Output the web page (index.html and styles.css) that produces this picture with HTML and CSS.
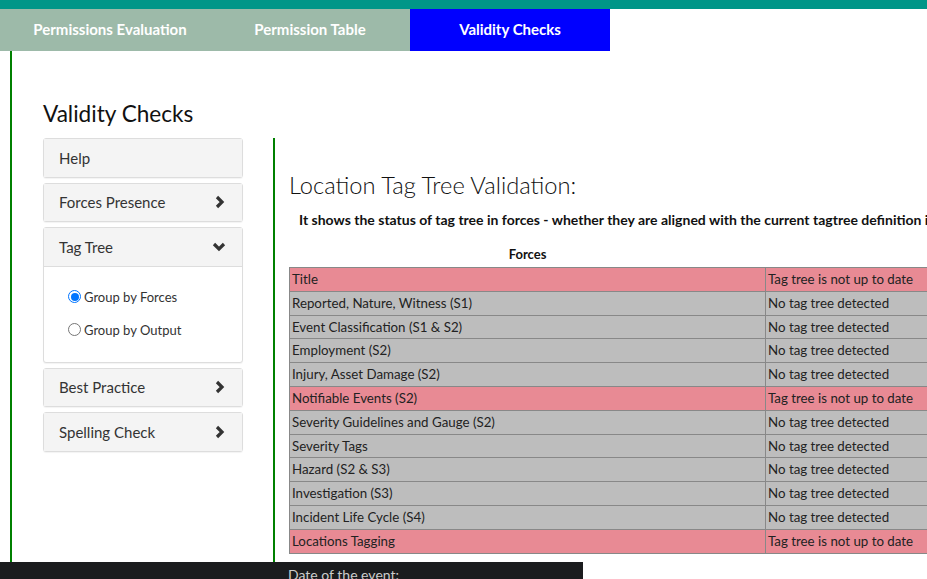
FILE: index.html
```html
<!DOCTYPE html>
<html>
<head>
<meta charset="utf-8">
<link rel="stylesheet" href="styles.css">
</head>
<body>
<div class="topbar"></div>
<nav class="tabs">
  <div class="tab tab-first">Permissions Evaluation</div>
  <div class="tab">Permission Table</div>
  <div class="tab active">Validity Checks</div>
</nav>
<main class="main">
  <h1 class="page-title">Validity Checks</h1>
  <div class="columns">
    <aside class="sidebar">
      <div class="panel"><div class="panel-head">Help</div></div>
      <div class="panel"><div class="panel-head">Forces Presence
        <svg class="chev" viewBox="0 0 12 14"><polyline points="3,2 8,7 3,12"/></svg></div></div>
      <div class="panel"><div class="panel-head open">Tag Tree
        <svg class="chev" viewBox="0 0 14 12"><polyline points="2,3 7,8 12,3"/></svg></div>
        <div class="panel-body">
          <label class="radio"><span class="dot checked"></span>Group by Forces</label>
          <label class="radio"><span class="dot"></span>Group by Output</label>
        </div>
      </div>
      <div class="panel"><div class="panel-head">Best Practice
        <svg class="chev" viewBox="0 0 12 14"><polyline points="3,2 8,7 3,12"/></svg></div></div>
      <div class="panel"><div class="panel-head">Spelling Check
        <svg class="chev" viewBox="0 0 12 14"><polyline points="3,2 8,7 3,12"/></svg></div></div>
    </aside>
    <section class="content">
      <h2 class="section-title">Location Tag Tree Validation:</h2>
      <p class="desc">It shows the status of tag tree in forces - whether they are aligned with the current tagtree definition in</p>
      <table class="grid">
        <thead>
          <tr><th class="c1">Forces</th><th class="c2"></th></tr>
        </thead>
        <tbody>
          <tr class="bad"><td>Title</td><td>Tag tree is not up to date</td></tr>
          <tr><td>Reported, Nature, Witness (S1)</td><td>No tag tree detected</td></tr>
          <tr><td>Event Classification (S1 &amp; S2)</td><td>No tag tree detected</td></tr>
          <tr><td>Employment (S2)</td><td>No tag tree detected</td></tr>
          <tr><td>Injury, Asset Damage (S2)</td><td>No tag tree detected</td></tr>
          <tr class="bad"><td>Notifiable Events (S2)</td><td>Tag tree is not up to date</td></tr>
          <tr><td>Severity Guidelines and Gauge (S2)</td><td>No tag tree detected</td></tr>
          <tr><td>Severity Tags</td><td>No tag tree detected</td></tr>
          <tr><td>Hazard (S2 &amp; S3)</td><td>No tag tree detected</td></tr>
          <tr><td>Investigation (S3)</td><td>No tag tree detected</td></tr>
          <tr><td>Incident Life Cycle (S4)</td><td>No tag tree detected</td></tr>
          <tr class="bad"><td>Locations Tagging</td><td>Tag tree is not up to date</td></tr>
        </tbody>
      </table>
    </section>
  </div>
</main>
<div class="footer-tip"><span>Date of the event:</span></div>
</body>
</html>
```

FILE: styles.css
```css
html, body {
  margin: 0;
  padding: 0;
  width: 927px;
  height: 579px;
  overflow: hidden;
  background: #fff;
  font-family: Lato, "Source Sans Pro", "Noto Sans", sans-serif;
  color: #333;
}
.topbar {
  height: 9px;
  background: #009688;
}
.tabs {
  display: flex;
  height: 42px;
  background: #9dbaa9;
  width: 610px;
}
.tab {
  width: 200px;
  display: flex;
  align-items: center;
  justify-content: center;
  color: #fff;
  font-weight: 700;
  font-size: 15px;
  padding-bottom: 2px;
  box-sizing: border-box;
}
.tab-first {
  width: 210px;
  padding-left: 10px;
}
.tab.active {
  background: #0000ff;
}
.main {
  margin-left: 10px;
  border-left: 2px solid #008000;
  height: 511px;
  padding-left: 31px;
  box-sizing: border-box;
  display: flex;
  flex-direction: column;
}
.page-title {
  margin: 48px 0 0 0;
  font-size: 22.6px;
  font-weight: 400;
  line-height: 30px;
  color: #111;
  height: 39px;
}
.columns {
  display: flex;
  flex: 1;
  gap: 30px;
}
.sidebar {
  width: 200px;
  display: flex;
  flex-direction: column;
  gap: 5px;
}
.panel {
  border: 1px solid #ddd;
  border-radius: 3px;
  background: #fff;
  box-shadow: 0 1px 1px rgba(0,0,0,0.05);
}
.panel-head {
  height: 37.5px;
  background: #f4f4f4;
  display: flex;
  align-items: center;
  justify-content: space-between;
  padding: 0 16px 0 15px;
  font-size: 15px;
  color: #333;
}
.panel-head.open {
  border-bottom: 1px solid #ddd;
}
.chev {
  width: 12px;
  height: 14px;
  fill: none;
  stroke: #333;
  stroke-width: 3.2;
}
.panel-head.open .chev {
  width: 14px;
  height: 12px;
}
.panel-body {
  height: 95px;
  padding: 22px 0 0 24px;
  box-sizing: border-box;
  display: flex;
  flex-direction: column;
  gap: 17px;
}
.radio {
  display: flex;
  align-items: center;
  font-size: 13px;
  color: #333;
  height: 16px;
}
.dot {
  width: 13px;
  height: 13px;
  border: 1px solid #767676;
  border-radius: 50%;
  margin-right: 3px;
  box-sizing: border-box;
  position: relative;
}
.dot.checked {
  border: 1px solid #0075ff;
}
.dot.checked::after {
  content: "";
  position: absolute;
  left: 1.5px;
  top: 1.5px;
  width: 8px;
  height: 8px;
  border-radius: 50%;
  background: #0075ff;
}
.content {
  border-left: 2px solid #008000;
  padding-left: 14px;
  flex: 1;
  overflow: hidden;
}
.section-title {
  margin: 35px 0 0 0;
  font-size: 23.7px;
  font-weight: 300;
  line-height: 24px;
  color: #111;
}
.desc {
  margin: 14px 0 0 10px;
  font-size: 14px;
  font-weight: 700;
  white-space: nowrap;
  color: #111;
  line-height: 18px;
}
.grid {
  margin-top: 12px;
  border-collapse: collapse;
  table-layout: fixed;
  width: 676px;
  font-size: 13.3px;
  color: #222;
}
.grid th {
  font-size: 13px;
  font-weight: 700;
  color: #111;
  height: 26px;
  text-align: center;
  padding: 0;
}
.grid .c1 { width: 476px; }
.grid .c2 { width: 200px; }
.grid td {
  border: 1px solid #888;
  background: #bdbdbd;
  padding: 1px 2px;
  line-height: 20.8px;
  white-space: nowrap;
}
.grid tr.bad td {
  background: #e88a94;
}
.footer-tip {
  position: fixed;
  left: 0;
  top: 562px;
  width: 583px;
  height: 17px;
  background: #1b1c1e;
  overflow: hidden;
}
.footer-tip span {
  position: absolute;
  left: 288px;
  top: 4px;
  font-size: 14px;
  color: #ccc;
}
```
